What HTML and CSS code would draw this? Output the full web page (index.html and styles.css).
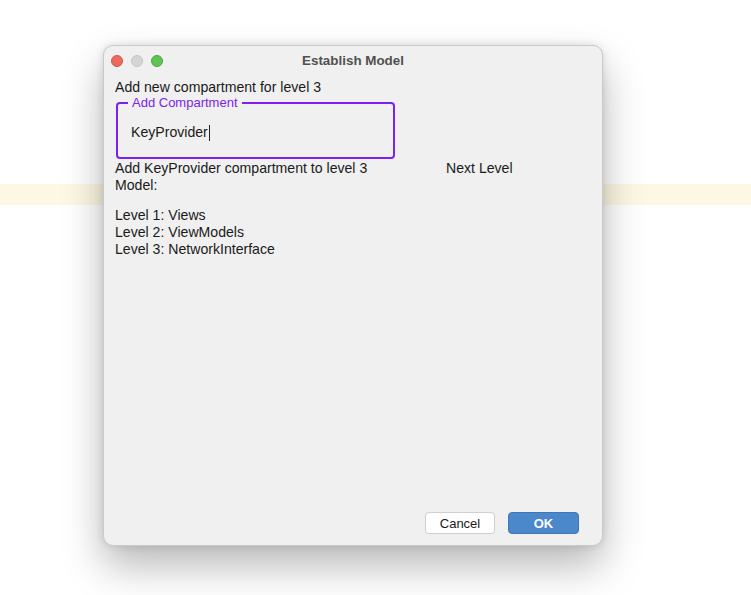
FILE: index.html
```html
<!DOCTYPE html>
<html>
<head>
<meta charset="utf-8">
<link rel="stylesheet" href="styles.css">
</head>
<body>
<div class="desk">
  <div class="dialog">
    <div class="titlebar">
      <div class="lights">
        <span class="light red"></span>
        <span class="light gray"></span>
        <span class="light green"></span>
      </div>
      <div class="title">Establish Model</div>
      <div></div>
    </div>
    <div class="content">
      <div class="line">Add new compartment for level 3</div>
      <fieldset class="field">
        <legend class="legend">Add Compartment</legend>
        <div class="input">KeyProvider<span class="caret"></span></div>
      </fieldset>
      <div class="row">
        <div class="line">Add KeyProvider compartment to level 3</div>
        <div class="line">Next Level</div>
      </div>
      <div class="line">Model:</div>
      <div class="levels">
        <div class="line">Level 1: Views</div>
        <div class="line">Level 2: ViewModels</div>
        <div class="line">Level 3: NetworkInterface</div>
      </div>
    </div>
    <div class="footer">
      <button class="btn cancel">Cancel</button>
      <button class="btn ok">OK</button>
    </div>
  </div>
</div>
</body>
</html>
```

FILE: styles.css
```css
html, body {
  margin: 0;
  padding: 0;
}
body {
  width: 751px;
  height: 595px;
  overflow: hidden;
  background: linear-gradient(to bottom, #ffffff 0, #ffffff 184px, #fdf8e3 184px, #fdf8e3 205px, #ffffff 205px);
  font-family: "Liberation Sans", Arial, sans-serif;
  font-size: 14.1px;
  color: #1a1a1a;
}
.desk {
  padding: 45px 0 0 103px;
}
.dialog {
  width: 500px;
  height: 501px;
  box-sizing: border-box;
  background: #f0f0f0;
  border: 1px solid #c9c9c9;
  border-radius: 10px;
  box-shadow: 0 20px 40px rgba(0, 0, 0, 0.28), 0 0 8px rgba(0, 0, 0, 0.12);
  display: flex;
  flex-direction: column;
}
.titlebar {
  height: 29px;
  display: grid;
  grid-template-columns: 1fr auto 1fr;
  align-items: center;
}
.lights {
  display: flex;
  gap: 8px;
  padding-left: 7px;
}
.light {
  width: 12px;
  height: 12px;
  border-radius: 50%;
  box-sizing: border-box;
}
.red { background: #ed6a5e; border: 0.5px solid #d35448; }
.gray { background: #d5d5d5; border: 0.5px solid #c4c4c4; }
.green { background: #5fc454; border: 0.5px solid #4aa73c; }
.title {
  font-weight: bold;
  color: #505050;
  font-size: 13.4px;
}
.content {
  flex: 1;
  padding: 4px 11px 0 11px;
}
.line {
  line-height: 17px;
  height: 17px;
  white-space: nowrap;
}
.field {
  margin: 0 0 0 1px;
  width: 279px;
  box-sizing: border-box;
  border: 2px solid #7b22f2;
  border-radius: 4px;
  padding: 14px 0 16px 13px;
  min-width: 0;
}
.legend {
  color: #7b22f2;
  font-size: 13px;
  line-height: 14px;
  padding: 0 4px;
  margin-left: -3px;
}
.input {
  line-height: 17px;
  height: 17px;
  display: flex;
  align-items: center;
}
.caret {
  display: inline-block;
  width: 1px;
  height: 16px;
  background: #222;
  margin-left: 1px;
}
.row {
  display: grid;
  grid-template-columns: 331px auto;
  margin-top: 1px;
}
.levels {
  margin-top: 13px;
}
.footer {
  display: flex;
  justify-content: flex-end;
  gap: 13px;
  padding: 0 23px 11px 0;
}
.btn {
  height: 22px;
  box-sizing: border-box;
  border-radius: 4px;
  font-family: "Liberation Sans", Arial, sans-serif;
  font-size: 13px;
  padding: 0;
}
.cancel {
  width: 70px;
  background: #ffffff;
  border: 1px solid #cfcfcf;
  color: #1a1a1a;
}
.ok {
  width: 71px;
  background: #4a87cb;
  border: 1px solid #3f78b8;
  color: #ffffff;
  font-weight: bold;
}
```
